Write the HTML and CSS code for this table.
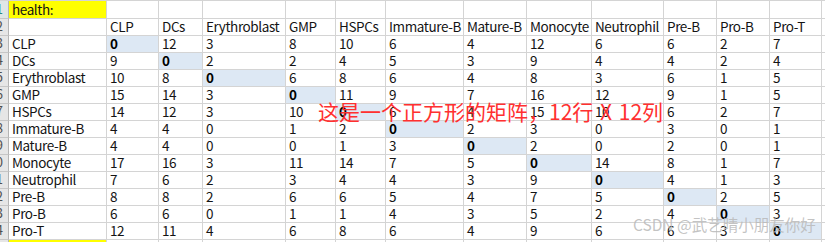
FILE: index.html
```html
<!DOCTYPE html>
<html lang="zh">
<head>
<meta charset="utf-8">
<title>health matrix</title>
<link rel="stylesheet" href="styles.css">
</head>
<body>
<div class="sheet">
  <div class="grid">
    <div class="rn act">1</div><div class="c yel">health:</div><div class="c"></div><div class="c"></div><div class="c"></div><div class="c"></div><div class="c"></div><div class="c"></div><div class="c"></div><div class="c"></div><div class="c"></div><div class="c"></div><div class="c"></div><div class="c"></div><div class="c last"></div>
    <div class="rn">2</div><div class="c"></div><div class="c">CLP</div><div class="c">DCs</div><div class="c">Erythroblast</div><div class="c">GMP</div><div class="c">HSPCs</div><div class="c">Immature-B</div><div class="c">Mature-B</div><div class="c">Monocyte</div><div class="c">Neutrophil</div><div class="c">Pre-B</div><div class="c">Pro-B</div><div class="c">Pro-T</div><div class="c last"></div>
    <div class="rn">3</div><div class="c">CLP</div><div class="c d">0</div><div class="c">12</div><div class="c">3</div><div class="c">8</div><div class="c">10</div><div class="c">6</div><div class="c">4</div><div class="c">12</div><div class="c">6</div><div class="c">6</div><div class="c">2</div><div class="c">7</div><div class="c last"></div>
    <div class="rn">4</div><div class="c">DCs</div><div class="c">9</div><div class="c d">0</div><div class="c">2</div><div class="c">2</div><div class="c">4</div><div class="c">5</div><div class="c">3</div><div class="c">9</div><div class="c">4</div><div class="c">4</div><div class="c">2</div><div class="c">4</div><div class="c last"></div>
    <div class="rn">5</div><div class="c">Erythroblast</div><div class="c">10</div><div class="c">8</div><div class="c d">0</div><div class="c">6</div><div class="c">8</div><div class="c">6</div><div class="c">4</div><div class="c">8</div><div class="c">3</div><div class="c">6</div><div class="c">1</div><div class="c">5</div><div class="c last"></div>
    <div class="rn">6</div><div class="c">GMP</div><div class="c">15</div><div class="c">14</div><div class="c">3</div><div class="c d">0</div><div class="c">11</div><div class="c">9</div><div class="c">7</div><div class="c">16</div><div class="c">12</div><div class="c">9</div><div class="c">1</div><div class="c">5</div><div class="c last"></div>
    <div class="rn">7</div><div class="c">HSPCs</div><div class="c">14</div><div class="c">12</div><div class="c">3</div><div class="c">10</div><div class="c d">0</div><div class="c">6</div><div class="c">4</div><div class="c">15</div><div class="c">10</div><div class="c">6</div><div class="c">2</div><div class="c">7</div><div class="c last"></div>
    <div class="rn">8</div><div class="c">Immature-B</div><div class="c">4</div><div class="c">4</div><div class="c">0</div><div class="c">1</div><div class="c">2</div><div class="c d">0</div><div class="c">2</div><div class="c">3</div><div class="c">0</div><div class="c">3</div><div class="c">0</div><div class="c">1</div><div class="c last"></div>
    <div class="rn">9</div><div class="c">Mature-B</div><div class="c">4</div><div class="c">4</div><div class="c">0</div><div class="c">0</div><div class="c">1</div><div class="c">3</div><div class="c d">0</div><div class="c">2</div><div class="c">0</div><div class="c">2</div><div class="c">0</div><div class="c">1</div><div class="c last"></div>
    <div class="rn">10</div><div class="c">Monocyte</div><div class="c">17</div><div class="c">16</div><div class="c">3</div><div class="c">11</div><div class="c">14</div><div class="c">7</div><div class="c">5</div><div class="c d">0</div><div class="c">14</div><div class="c">8</div><div class="c">1</div><div class="c">7</div><div class="c last"></div>
    <div class="rn">11</div><div class="c">Neutrophil</div><div class="c">7</div><div class="c">6</div><div class="c">2</div><div class="c">3</div><div class="c">4</div><div class="c">4</div><div class="c">3</div><div class="c">9</div><div class="c d">0</div><div class="c">4</div><div class="c">1</div><div class="c">3</div><div class="c last"></div>
    <div class="rn">12</div><div class="c">Pre-B</div><div class="c">8</div><div class="c">8</div><div class="c">2</div><div class="c">6</div><div class="c">6</div><div class="c">5</div><div class="c">4</div><div class="c">7</div><div class="c">5</div><div class="c d">0</div><div class="c">2</div><div class="c">5</div><div class="c last"></div>
    <div class="rn">13</div><div class="c">Pro-B</div><div class="c">6</div><div class="c">6</div><div class="c">0</div><div class="c">1</div><div class="c">1</div><div class="c">4</div><div class="c">3</div><div class="c">5</div><div class="c">2</div><div class="c">4</div><div class="c d">0</div><div class="c">3</div><div class="c last"></div>
    <div class="rn">14</div><div class="c">Pro-T</div><div class="c">12</div><div class="c">11</div><div class="c">4</div><div class="c">6</div><div class="c">8</div><div class="c">6</div><div class="c">4</div><div class="c">9</div><div class="c">6</div><div class="c">6</div><div class="c">3</div><div class="c d">0</div><div class="c last"></div>
    <div class="rn">15</div><div class="c yel"></div><div class="c"></div><div class="c"></div><div class="c"></div><div class="c"></div><div class="c"></div><div class="c"></div><div class="c"></div><div class="c"></div><div class="c"></div><div class="c"></div><div class="c"></div><div class="c"></div><div class="c last"></div>
  </div>
  <div class="note">这是一个正方形的矩阵，<span class="tail">12行 X 12列</span></div>
  <div class="wm">CSDN @武艺晴小朋友你好</div>
</div>
</body>
</html>
```

FILE: styles.css
```css
html, body {
  margin: 0;
  padding: 0;
  background: #ffffff;
}

body {
  overflow: hidden;
  font-family: "Noto Sans CJK SC", sans-serif;
}

.sheet {
  position: relative;
  width: 825px;
  height: 242px;
  overflow: hidden;
  box-sizing: border-box;
  border-top: 1px solid #d4d4d4;
}

.grid {
  display: grid;
  grid-template-columns: 9px 98px 52px 44px 83px 50px 50px 78px 63px 65px 72px 53px 53px 52px 60px;
  grid-template-rows: 18px repeat(14, 17px);
}

.c {
  box-sizing: border-box;
  display: flex;
  align-items: flex-end;
  border-right: 1px solid #d4d4d4;
  border-bottom: 1px solid #d4d4d4;
  padding-left: 3px;
  font-family: "Noto Sans CJK SC", sans-serif;
  font-size: 13.5px;
  letter-spacing: -0.4px;
  line-height: 16px;
  padding-bottom: 1px;
  color: #141414;
  white-space: nowrap;
  overflow: hidden;
}

.c.last {
  border-right: none;
}

.yel {
  background: #ffff00;
}

.d {
  background: #dde8f4;
  font-weight: bold;
  color: #000;
}

.rn {
  box-sizing: border-box;
  display: flex;
  align-items: flex-end;
  justify-content: flex-end;
  overflow: hidden;
  background: #e6e6e6;
  border-right: 1px solid #b4b4b4;
  border-bottom: 1px solid #c6c6c6;
  padding-right: 5px;
  padding-bottom: 1px;
  font-family: "Noto Sans CJK SC", sans-serif;
  font-size: 13px;
  line-height: 16px;
  color: #505050;
  white-space: nowrap;
}

.rn.act {
  color: #2b8a83;
  background: #dfe6e6;
}

.note {
  position: absolute;
  left: 318px;
  top: 100px;
  font-size: 21px;
  line-height: 1;
  color: #ff3030;
  white-space: nowrap;
  font-family: "Noto Sans CJK SC", sans-serif;
}

.tail {
  letter-spacing: 0;
  word-spacing: 2px;
}

.wm {
  position: absolute;
  left: 633px;
  top: 216px;
  font-size: 15.5px;
  line-height: 1;
  color: rgba(185, 185, 185, 0.85);
  white-space: nowrap;
  font-family: "Noto Sans CJK SC", sans-serif;
}
```
